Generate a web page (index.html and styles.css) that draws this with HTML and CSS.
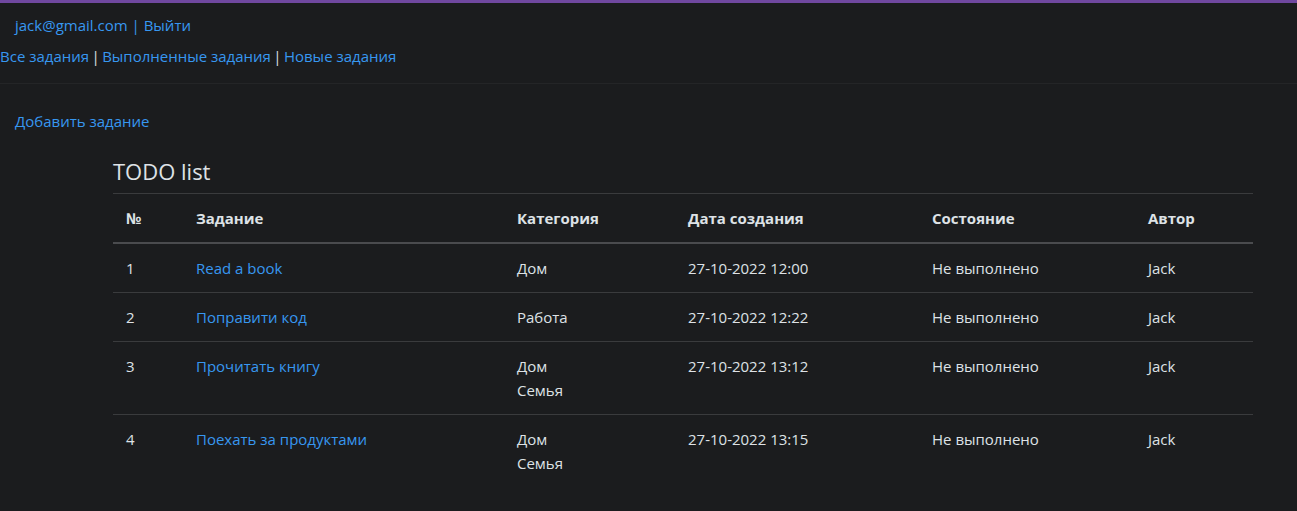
FILE: index.html
```html
<!DOCTYPE html>
<html lang="ru">
<head>
<meta charset="utf-8">
<link rel="stylesheet" href="styles.css">
</head>
<body>
<div class="topbar"></div>
<header class="header">
  <div class="user"><a href="#">jack@gmail.com | Выйти</a></div>
  <nav class="nav"><a href="#">Все задания</a><span class="sep"> | </span><a href="#">Выполненные задания</a><span class="sep"> | </span><a href="#">Новые задания</a></nav>
</header>
<main class="main">
  <div class="add"><a href="#">Добавить задание</a></div>
  <section class="todo">
    <h2 class="title">TODO list</h2>
    <table class="table">
      <colgroup>
        <col class="c1"><col class="c2"><col class="c3"><col class="c4"><col class="c5"><col class="c6">
      </colgroup>
      <thead>
        <tr><th>№</th><th>Задание</th><th>Категория</th><th>Дата создания</th><th>Состояние</th><th>Автор</th></tr>
      </thead>
      <tbody>
        <tr><td>1</td><td><a href="#">Read a book</a></td><td>Дом</td><td>27-10-2022 12:00</td><td>Не выполнено</td><td>Jack</td></tr>
        <tr><td>2</td><td><a href="#">Поправити код</a></td><td>Работа</td><td>27-10-2022 12:22</td><td>Не выполнено</td><td>Jack</td></tr>
        <tr><td>3</td><td><a href="#">Прочитать книгу</a></td><td>Дом<br>Семья</td><td>27-10-2022 13:12</td><td>Не выполнено</td><td>Jack</td></tr>
        <tr class="last"><td>4</td><td><a href="#">Поехать за продуктами</a></td><td>Дом<br>Семья</td><td>27-10-2022 13:15</td><td>Не выполнено</td><td>Jack</td></tr>
      </tbody>
    </table>
  </section>
</main>
</body>
</html>
```
FILE: styles.css
```css
* { box-sizing: border-box; }
html, body { margin: 0; padding: 0; }
body {
  background: #1b1c1e;
  color: #dee2e6;
  font-family: "Open Sans", "Noto Sans", sans-serif;
  font-size: 15px;
  line-height: 24px;
  width: 1297px;
  height: 511px;
  overflow: hidden;
}
a { color: #3797f0; text-decoration: none; }
.topbar { height: 3px; background: #7048a0; }
.header { border-bottom: 1px solid #242527; padding-bottom: 15px; }
.user { padding: 10px 0 0 15px; height: 40px; }
.nav { padding: 1px 0 0 0; height: 25px; }
.nav .sep { margin: 0 -1.5px; }
.main { padding-top: 25px; }
.add { padding-left: 15px; }
.todo { margin-left: 113px; width: 1140px; padding-top: 23px; }
.title { font-weight: 400; font-size: 22px; line-height: 30px; margin: 0 0 7px 0; color: #dee2e6; }
.table { width: 100%; border-collapse: collapse; table-layout: fixed; }
.c1 { width: 70px; } .c2 { width: 321px; } .c3 { width: 171px; } .c4 { width: 244px; } .c5 { width: 216px; } .c6 { width: 118px; }
.table th, .table td { text-align: left; vertical-align: top; padding: 12px 13px; }
.table thead tr { border-top: 1px solid #3a3b3d; border-bottom: 2px solid #4a4b4e; }
.table th { font-weight: 700; }
.table tbody tr { border-bottom: 1px solid #3a3b3d; }
.table tbody tr.last { border-bottom: none; }
```
